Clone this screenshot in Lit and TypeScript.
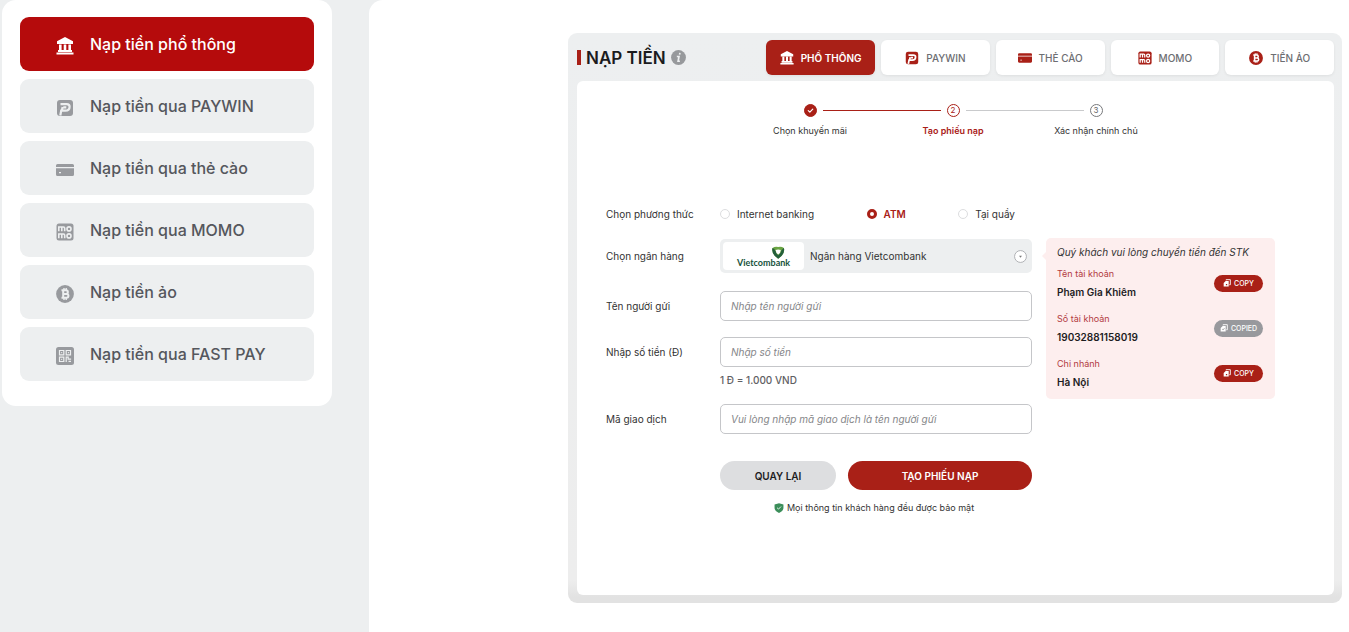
import { LitElement, html, css, svg, nothing } from "lit";
import { customElement, property, state } from "lit/decorators.js";
import { classMap } from "lit/directives/class-map.js";

const glyphs: Record<string, unknown> = {
  bank: svg`<path fill="currentColor" d="M9 0 1 4.200V7h16V4.200zM3 7.500h2.600V13H3zM7.700 7.500h2.600V13H7.700zM12.400 7.500H15V13h-2.600zM2 13h14v2H2zM.5 15.500h17v2H.5z"/>`,
  paywin: svg`<path fill="currentColor" d="M4 1h10a3 3 0 0 1 3 3v10a3 3 0 0 1-3 3H4a3 3 0 0 1-3-3V4a3 3 0 0 1 3-3z"/><path fill="none" stroke="var(--cut)" stroke-width="2.200" d="M4.500 5.200h6.200c1.900 0 2.900 1 2.900 2.600 0 2.500-1.700 3.900-4.200 3.900H5.200L4.300 16.500M7.300 8.400h3M6.600 8 5.900 11.500"/>`,
  card: svg`<path fill="currentColor" d="M1.500 3h15q1.500 0 1.500 1.500V6H0V4.500Q0 3 1.500 3zM0 7.200h18v6.300q0 1.500-1.500 1.500h-15Q0 15 0 13.500zm3 3.900v1.200h2v-1.200z" fill-rule="evenodd"/>`,
  momo: svg`<rect x=".5" y=".5" width="17" height="17" rx="2.500" fill="currentColor"/><g fill="none" stroke="var(--cut)" stroke-width="1.600"><path d="M2.800 8.200V4h4.700q1.200 0 1.200 1.200v3M5.800 4v4.200M2.800 15.200V11h4.700q1.200 0 1.200 1.200v3M5.800 11v4.200"/><circle cx="13" cy="5.900" r="2"/><circle cx="13" cy="12.900" r="2"/></g>`,
  coin: svg`<circle cx="9" cy="9" r="8.900" fill="currentColor"/><path fill="none" stroke="var(--cut)" stroke-width="2" d="M5.500 5.200h4.500a1.800 1.800 0 0 1 0 3.700H7m0 0h3.500a1.950 1.950 0 0 1 0 3.900h-5M7.200 5.200v7.600"/><path fill="none" stroke="var(--cut)" stroke-width="1.400" d="M8 3v2M10.200 3v2M8 13v2M10.200 13v2"/>`,
  qr: svg`<rect x="0" y="0" width="18" height="18" rx="2.500" fill="currentColor"/><g fill="none" stroke="var(--cut)" stroke-width="1.200"><path d="M3.500 3.500h4.300v4.300H3.500zM10.200 3.500h4.300v4.300h-4.300zM3.500 10.200h4.300v4.300H3.500zM10.200 15v-4.800h2v2h2.900"/><path d="M5.200 5.700h1M11.900 5.700h1M5.200 12.400h1M12.500 14.300h2.500"/></g>`,
  info: svg`<circle cx="9" cy="9" r="8.900" fill="currentColor"/><path fill="none" stroke="var(--cut)" stroke-width="2" d="M10.700 3.500 10.300 5.500M7 7.800h2.600l-1.100 5.700h2.200"/>`,
  check: svg`<path fill="none" stroke="currentColor" stroke-width="2.400" stroke-linecap="round" stroke-linejoin="round" d="m4.500 9.200 3.200 3 5.800-6"/>`,
  copy: svg`<path fill="none" stroke="currentColor" stroke-width="2" d="M7 3V1.500h9.500V13H14"/><path fill="currentColor" fill-rule="evenodd" d="M6 4.500h6.800V17H1.500V9zm.5 6.500v3h3v-3z"/>`,
  copied: svg`<path fill="none" stroke="currentColor" stroke-width="2" d="M7 3V1.500h9.500V13H14"/><path fill="currentColor" fill-rule="evenodd" d="M6 4.500h6.800V17H1.500V9zm-1.700 7 2.500 2.700 4-4.200-1-1-3 3-1.500-1.500z"/>`,
  chevron: svg`<circle cx="9" cy="9" r="8.200" fill="#fff" stroke="#a6a8ac" stroke-width="1.200"/><path fill="#777" d="m7 8 2 2.600L11 8z"/>`,
  shield: svg`<path fill="#3b8e5a" d="M9 .5 17 2.500V9c0 4-3.700 7-8 8.800C4.700 16 1 13 1 9V2.500z"/><path fill="none" stroke="#e5f4ea" stroke-width="1.800" d="m5.500 8.500 2.600 2.500 4.500-4.600"/>`,
};

@customElement("ui-icon")
class UiIcon extends LitElement {
  @property() name = "";
  static styles = css`
    :host { display: inline-flex; flex: none; width: 18px; height: 18px; }
    svg { display: block; width: 100%; height: 100%; }
  `;
  render() {
    return html`<svg viewBox="0 0 18 18" aria-hidden="true">${glyphs[this.name] ?? nothing}</svg>`;
  }
}

@customElement("side-menu")
class SideMenu extends LitElement {
  private items = [
    ["bank", "Nạp tiền phổ thông"],
    ["paywin", "Nạp tiền qua PAYWIN"],
    ["card", "Nạp tiền qua thẻ cào"],
    ["momo", "Nạp tiền qua MOMO"],
    ["coin", "Nạp tiền ảo"],
    ["qr", "Nạp tiền qua FAST PAY"],
  ];
  static styles = css`
    :host { display: block; }
    .menu { display: flex; flex-direction: column; gap: 8px; padding: 17px 18px 25px; border-radius: 14px; background: #fff; }
    .item { --cut: #edeff0; display: flex; align-items: center; gap: 16px; height: 54px; padding: 0 36px; border-radius: 9px; background: #edeff0; color: #55575d; font-size: 16px; font-weight: 450; text-decoration: none; white-space: nowrap; }
    .item ui-icon { color: #989a9e; margin-top: 3px; }
    .item.active { background: #b50b0c; color: #fff; font-weight: 500; }
    .item.active ui-icon { color: #fff; }
  `;
  render() {
    return html`<nav class="menu">
      ${this.items.map(([icon, text], i) => html`<a href="#" class=${classMap({ item: true, active: i === 0 })}><ui-icon name=${icon}></ui-icon><span>${text}</span></a>`)}
    </nav>`;
  }
}

@customElement("account-card")
class AccountCard extends LitElement {
  private rows = [
    ["Tên tài khoản", "Phạm Gia Khiêm", false],
    ["Số tài khoản", "19032881158019", true],
    ["Chi nhánh", "Hà Nội", false],
  ] as [string, string, boolean][];
  static styles = css`
    :host { display: block; }
    .card { position: relative; padding: 6px 12px 8px 11px; border-radius: 5px; background: #fdeeee; }
    .card::before { content: ""; position: absolute; left: -4px; top: 14px; border: 4px solid transparent; border-left-width: 0; border-right-color: #fdeeee; }
    .lead { margin: 0 0 5px; font-size: 10px; line-height: 16px; font-style: italic; color: #333; white-space: nowrap; }
    .rows { display: grid; gap: 9px; }
    .row { display: flex; align-items: center; justify-content: space-between; height: 36px; }
    .pair { margin: 0; }
    dt { font-size: 9px; line-height: 18px; color: #b23a3f; }
    dd { margin: 0; font-size: 10px; line-height: 18px; font-weight: 600; color: #1d1d1f; }
    .copy { display: flex; align-items: center; justify-content: center; gap: 3px; width: 49px; height: 17px; padding: 0; border: 0; border-radius: 9px; background: #a92017; color: #fff; font: 500 7px/17px Inter, sans-serif; }
    .copy ui-icon { width: 8px; height: 8px; }
    .copy.done { background: #98999d; }
  `;
  render() {
    return html`<section class="card">
      <p class="lead">Quý khách vui lòng chuyển tiền đến STK</p>
      <div class="rows">
        ${this.rows.map(([k, v, done]) => html`<div class="row">
          <dl class="pair"><dt>${k}</dt><dd>${v}</dd></dl>
          <button type="button" class=${classMap({ copy: true, done })}><ui-icon name=${done ? "copied" : "copy"}></ui-icon>${done ? "COPIED" : "COPY"}</button>
        </div>`)}
      </div>
    </section>`;
  }
}

@customElement("deposit-panel")
class DepositPanel extends LitElement {
  @state() private method = "atm";
  private tabs = [
    ["bank", "PHỔ THÔNG"],
    ["paywin", "PAYWIN"],
    ["card", "THẺ CÀO"],
    ["momo", "MOMO"],
    ["coin", "TIỀN ẢO"],
  ];
  private methods = [
    ["net", "Internet banking"],
    ["atm", "ATM"],
    ["desk", "Tại quầy"],
  ];
  static styles = css`
    :host { display: block; }
    * { box-sizing: border-box; }
    .panel { padding: 7px 8px 8px 9px; border-radius: 9px; background: linear-gradient(#edeff0 0, #ededed 96%, #e2e2e2 99%); }
    .head { display: flex; align-items: center; justify-content: space-between; margin-bottom: 6px; }
    .title { --cut: #edeff0; display: flex; align-items: center; gap: 5px; margin: 0; font-size: 17px; line-height: 24px; font-weight: 600; color: #1b1b1d; white-space: nowrap; }
    .title::before { content: ""; width: 4px; height: 15px; background: #a92017; }
    .title ui-icon { width: 15px; height: 15px; color: #97999c; }
    .tabs { display: grid; grid-template-columns: repeat(5, 1fr); gap: 6px; flex: 0 0 75%; }
    .tab { --cut: #fff; display: flex; align-items: center; justify-content: center; gap: 7px; height: 35px; padding: 0; border: 0; border-radius: 6px; background: #fff; color: #6d6e72; font: 500 10px/16px Inter, sans-serif; white-space: nowrap; box-shadow: 0 1px 3px #0001; }
    .tab ui-icon { width: 14px; height: 14px; color: #a92017; }
    .tab.active, .tab.active ui-icon { color: #fff; }
    .tab.active { background: #a92017; font-weight: 600; }
    .body { min-height: 514px; padding: 23px 34px 32px 29px; border-radius: 6px; background: #fff; }
    .steps { display: grid; grid-template-columns: repeat(3, 143px); justify-content: center; margin: 0 0 68px; padding: 0; list-style: none; }
    .step { --l: transparent; --r: transparent; text-align: center; font-size: 9px; line-height: 16px; color: #333; }
    .mark { display: flex; align-items: center; gap: 6px; margin-bottom: 6px; }
    .mark::before, .mark::after { content: ""; flex: 1; height: 1px; background: var(--l); }
    .mark::after { background: var(--r); }
    .dot { display: grid; place-items: center; width: 13px; height: 13px; border: 1px solid #77787b; border-radius: 50%; font-size: 8px; line-height: 11px; color: #66676a; }
    .dot ui-icon { width: 9px; height: 9px; }
    .step.done { --r: #a92017; }
    .done .dot { background: #a92017; border-color: #a92017; color: #fff; }
    .step.now { --l: #a92017; --r: #c9cacc; color: #a92017; font-weight: 600; }
    .now .dot { border-color: #a92017; color: #a92017; font-weight: 400; }
    .step.next { --l: #c9cacc; }
    .cols { display: flex; align-items: flex-start; gap: 14px; }
    .form { flex: 0 1 426px; display: grid; grid-template-columns: 114px 1fr; row-gap: 16px; align-items: center; font-size: 10px; line-height: 14px; color: #333; }
    .cols account-card { flex: 0 0 229px; margin-top: 31px; }
    .radios { display: flex; justify-content: space-between; padding: 0 17px 0 0; }
    .radio { display: flex; align-items: center; gap: 7px; white-space: nowrap; }
    .radio input { appearance: none; width: 10px; height: 10px; margin: 0; border: 1px solid #dcdddf; border-radius: 50%; background: #fff; }
    .radio input:checked { border: 3px solid #a92017; }
    .radio.on { color: #a92017; font-weight: 600; }
    .bank { position: relative; height: 34px; margin: 2px 0; }
    .bank select { width: 100%; height: 34px; padding: 0 30px 0 90px; border: 0; border-radius: 5px; background: #edeff0; appearance: none; color: #333; font: 400 10px/16px Inter, sans-serif; }
    .bank ui-icon { position: absolute; right: 5px; top: 11px; width: 13px; height: 13px; pointer-events: none; }
    .logo { position: absolute; left: 3px; top: 3px; width: 81px; height: 28px; border-radius: 4px; background: #fff; pointer-events: none; }
    .logo svg { display: block; }
    .brand { font: 700 9px/10px Lato, sans-serif; fill: #18523c; }
    .text { width: 100%; height: 30px; padding: 0 10px; border: 1px solid #c5c6c9; border-radius: 5px; background: #fff; color: #333; font: 400 10px/16px Inter, sans-serif; }
    .text::placeholder { color: #858689; opacity: 1; font-style: italic; }
    .hint { grid-column: 2; margin: -11px 0 0; line-height: 16px; font-weight: 500; color: #5f6063; }
    .actions { grid-column: 2; display: grid; grid-template-columns: 116px 1fr; gap: 12px; margin-top: 11px; }
    .btn { height: 29px; padding: 0; border: 0; border-radius: 15px; background: #dddee0; color: #1d1d1f; font: 600 10px/16px Inter, sans-serif; }
    .btn.main { background: #a92017; color: #fff; }
    .safe { grid-column: 2; display: flex; align-items: center; justify-content: center; gap: 3px; margin: -6px 0 0; padding-right: 4px; font-size: 9px; line-height: 16px; white-space: nowrap; }
    .safe ui-icon { width: 10px; height: 10px; }
  `;
  render() {
    return html`<section class="panel">
      <header class="head">
        <h1 class="title">NẠP TIỀN <ui-icon name="info"></ui-icon></h1>
        <div class="tabs">
          ${this.tabs.map(([icon, text], i) => html`<button type="button" class=${classMap({ tab: true, active: i === 0 })}><ui-icon name=${icon}></ui-icon>${text}</button>`)}
        </div>
      </header>
      <div class="body">
        <ol class="steps">
          <li class="step done"><div class="mark"><span class="dot"><ui-icon name="check"></ui-icon></span></div>Chọn khuyến mãi</li>
          <li class="step now"><div class="mark"><span class="dot">2</span></div>Tạo phiếu nạp</li>
          <li class="step next"><div class="mark"><span class="dot">3</span></div>Xác nhận chính chủ</li>
        </ol>
        <div class="cols">
          <form class="form">
            <span id="method">Chọn phương thức</span>
            <div class="radios" role="radiogroup" aria-labelledby="method">
              ${this.methods.map(([id, text]) => html`<label class=${classMap({ radio: true, on: id === this.method })}><input type="radio" name="method" .checked=${id === this.method} @change=${() => (this.method = id)} />${text}</label>`)}
            </div>
            <label for="bank">Chọn ngân hàng</label>
            <div class="bank">
              <select id="bank"><option>Ngân hàng Vietcombank</option></select>
              <span class="logo"><svg width="81" height="28" viewBox="0 0 81 28" aria-hidden="true">
                <path fill="#6aa443" d="M49.500 6q2.800-2 5.700-1 2.900-1 5.700 1 1.500 6-5.700 10.800Q48 12 49.500 6z"/>
                <path fill="#245f3c" d="M49.500 6q2 .2 3.200 3.600 1 2.800 2.500 3.600 2.700-1.500 3.300-5l2.400-2.200q1.500 6-5.700 10.800Q48 12 49.500 6z"/>
                <path fill="#fff" d="M52.600 8q2.600-1.200 5.200 0-.2 3-2.600 4.600-2.400-1.600-2.600-4.600z"/>
                <text class="brand" x="14" y="24">Vietcombank</text>
              </svg></span>
              <ui-icon name="chevron"></ui-icon>
            </div>
            <label for="sender">Tên người gửi</label>
            <input class="text" id="sender" placeholder="Nhập tên người gửi" />
            <label for="amount">Nhập số tiền (Đ)</label>
            <input class="text" id="amount" placeholder="Nhập số tiền" />
            <p class="hint">1 Đ = 1.000 VND</p>
            <label for="code">Mã giao dịch</label>
            <input class="text" id="code" placeholder="Vui lòng nhập mã giao dịch là tên người gửi" />
            <div class="actions">
              <button type="button" class="btn">QUAY LẠI</button>
              <button type="button" class="btn main">TẠO PHIẾU NẠP</button>
            </div>
            <p class="safe"><ui-icon name="shield"></ui-icon>Mọi thông tin khách hàng đều được bảo mật</p>
          </form>
          <account-card></account-card>
        </div>
      </div>
    </section>`;
  }
}

@customElement("app-root")
class AppRoot extends LitElement {
  static styles = css`
    :host { display: block; font-family: Inter, sans-serif; }
    * { box-sizing: border-box; }
    .page { display: grid; grid-template-columns: 369px 1fr; min-height: 100vh; background: #edeff0; }
    .side { padding: 0 37px 0 2px; }
    .main { padding: 33px 7px 29px 199px; border-radius: 14px 0 0 0; background: #fff; }
  `;
  render() {
    return html`<div class="page">
      <aside class="side"><side-menu></side-menu></aside>
      <main class="main"><deposit-panel></deposit-panel></main>
    </div>`;
  }
}
